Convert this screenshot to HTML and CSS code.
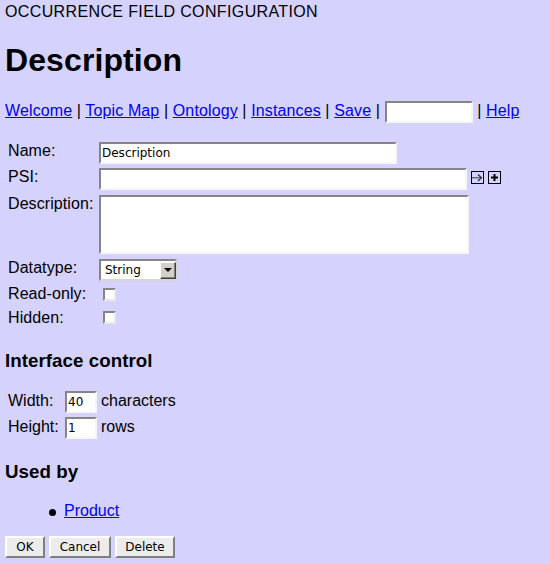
FILE: index.html
```html
<!DOCTYPE html>
<html>
<head>
<meta charset="utf-8">
<title>Occurrence field configuration</title>
<link rel="stylesheet" href="styles.css">
</head>
<body>
<div class="page">
  <div class="kicker">OCCURRENCE FIELD CONFIGURATION</div>
  <h1>Description</h1>
  <div class="nav"><a href="#">Welcome</a> | <a href="#">Topic Map</a> | <a href="#">Ontology</a> | <a href="#">Instances</a> | <a href="#">Save</a> | <input type="text" class="field search"> | <a href="#">Help</a></div>

  <form class="form">
    <div class="row r-name">
      <label class="lbl">Name:</label>
      <input type="text" class="field name" value="Description">
    </div>
    <div class="row r-psi">
      <label class="lbl">PSI:</label>
      <input type="text" class="field psi">
      <svg class="icon" width="13" height="13" viewBox="0 0 13 13"><rect x="0.5" y="0.5" width="12" height="12" fill="none" stroke="#000"/><rect x="1" y="6" width="9" height="1.5" fill="#6a6a78"/><path d="M7 3.5L10.5 6.75L7 10" fill="none" stroke="#222" stroke-width="1.1"/></svg>
      <svg class="icon" width="13" height="13" viewBox="0 0 13 13"><rect x="0.5" y="0.5" width="12" height="12" fill="none" stroke="#000"/><rect x="5.5" y="3" width="2" height="7" fill="#000"/><rect x="3" y="5.5" width="7" height="2" fill="#000"/></svg>
    </div>
    <div class="row r-desc">
      <label class="lbl">Description:</label>
      <textarea class="field desc"></textarea>
    </div>
    <div class="row r-type">
      <label class="lbl">Datatype:</label>
      <span class="selwrap"><select class="sel"><option>String</option></select><span class="selbtn"></span></span>
    </div>
    <div class="row r-ro">
      <label class="lbl">Read-only:</label>
      <input type="checkbox" class="chk">
    </div>
    <div class="row r-hid">
      <label class="lbl">Hidden:</label>
      <input type="checkbox" class="chk">
    </div>
  </form>

  <h3>Interface control</h3>
  <div class="dims">
    <span class="dlbl">Width:</span><input type="text" class="field num" value="40"><span class="unit">characters</span>
    <span class="dlbl">Height:</span><input type="text" class="field num" value="1"><span class="unit">rows</span>
  </div>

  <h3>Used by</h3>
  <ul class="used"><li><a href="#">Product</a></li></ul>

  <div class="buttons">
    <button type="button" class="btn b-ok">OK</button>
    <button type="button" class="btn b-cancel">Cancel</button>
    <button type="button" class="btn b-delete">Delete</button>
  </div>
</div>
</body>
</html>
```

FILE: styles.css
```css
html, body {
  margin: 0;
  padding: 0;
}
body {
  background: #d5d2fe;
  font-family: "Liberation Sans", Arial, sans-serif;
  font-size: 16px;
  color: #000;
}
.page {
  padding: 3px 5px 0;
}
.kicker {
  line-height: normal;
  letter-spacing: 0.37px;
}
h1 {
  font-size: 32px;
  font-weight: bold;
  margin: 21.44px 0;
  line-height: normal;
  letter-spacing: 0.1px;
}
h3 {
  font-size: 18.72px;
  font-weight: bold;
  margin: 18.72px 0;
  line-height: normal;
  letter-spacing: 0.06px;
}
a {
  color: #0000ee;
  text-decoration: underline;
}
.nav {
  height: 22px;
  margin-bottom: 19px;
  white-space: nowrap;
  letter-spacing: 0.12px;
}
.field {
  box-sizing: border-box;
  margin: 0;
  border: 2px solid;
  border-color: #858585 #f6f6f6 #f6f6f6 #858585;
  background: #fff;
  font-family: "DejaVu Sans", sans-serif;
  font-size: 12px;
  letter-spacing: 0;
  color: #000;
  padding: 1px;
  outline: none;
}
.search {
  width: 88px;
  height: 22px;
  vertical-align: middle;
}
.form {
  margin: 0;
  padding-left: 3px;
  display: flex;
  flex-direction: column;
}
.row {
  display: flex;
  align-items: flex-start;
}
.lbl {
  width: 91px;
  flex: none;
  line-height: normal;
  letter-spacing: 0.08px;
}
.name {
  width: 298px;
  height: 22px;
}
.r-psi {
  margin-top: 4px;
  height: 22px;
}
.psi {
  width: 368px;
  height: 22px;
}
.icon {
  display: block;
  flex: none;
  margin: 3px 0 0 4px;
}
.r-desc {
  margin-top: 5px;
}
.desc {
  display: block;
  width: 370px;
  height: 59px;
  margin: 0;
  resize: none;
}
.r-type {
  margin-top: 5px;
  height: 22px;
}
.selwrap {
  position: relative;
  display: block;
  width: 78px;
  height: 22px;
}
.sel {
  appearance: none;
  -webkit-appearance: none;
  display: block;
  box-sizing: border-box;
  width: 78px;
  height: 22px;
  margin: 0;
  border: 2px solid;
  border-color: #858585 #d6d6d6 #d6d6d6 #858585;
  background: #fff;
  font-family: "DejaVu Sans", sans-serif;
  font-size: 12px;
  color: #000;
  padding: 0 0 0 4px;
  border-radius: 0;
  outline: none;
}
.selbtn {
  position: absolute;
  right: 1px;
  top: 3px;
  width: 16px;
  height: 17px;
  box-sizing: border-box;
  background: #d4d0c8;
  border: 1px solid;
  border-color: #fff #404040 #404040 #fff;
  box-shadow: inset -1px -1px 0 #808080;
}
.selbtn::after {
  content: "";
  position: absolute;
  left: 3px;
  top: 5px;
  border-top: 4px solid #000;
  border-left: 4px solid transparent;
  border-right: 4px solid transparent;
}
.r-ro {
  margin-top: 4px;
  height: 24px;
}
.r-hid {
  height: 22px;
}
.chk {
  appearance: none;
  -webkit-appearance: none;
  box-sizing: border-box;
  width: 13px;
  height: 13px;
  margin: 3px 0 0 4px;
  border: 2px solid;
  border-color: #858585 #e8e8e8 #e8e8e8 #858585;
  background: #fff;
  border-radius: 0;
}
.r-hid .chk {
  margin-top: 2px;
}
.dims {
  display: grid;
  grid-template-columns: 57px 32px auto;
  row-gap: 4px;
  justify-content: start;
  align-items: start;
  padding: 1px 0 3px 3px;
}
.dlbl, .unit {
  line-height: normal;
  margin-top: 1px;
}
.unit {
  margin-left: 4px;
}
.num {
  width: 32px;
  height: 22px;
}
.used {
  margin: 16px 0;
  padding-left: 59px;
  line-height: normal;
  list-style: none;
}
.used li {
  position: relative;
}
.used li::before {
  content: "";
  position: absolute;
  left: -15px;
  top: 7px;
  width: 7px;
  height: 7px;
  border-radius: 50%;
  background: #000;
}
.buttons {
  display: flex;
  gap: 4px;
}
.btn {
  box-sizing: border-box;
  height: 22px;
  margin: 0;
  padding: 0;
  border: 2px solid;
  border-color: #fff #7f7f7f #7f7f7f #fff;
  background: #ececec;
  color: #000;
  font-family: "DejaVu Sans", sans-serif;
  font-size: 12px;
  border-radius: 0;
  text-align: center;
}
.b-ok { width: 40px; }
.b-cancel { width: 62px; }
.b-delete { width: 60px; }
```
